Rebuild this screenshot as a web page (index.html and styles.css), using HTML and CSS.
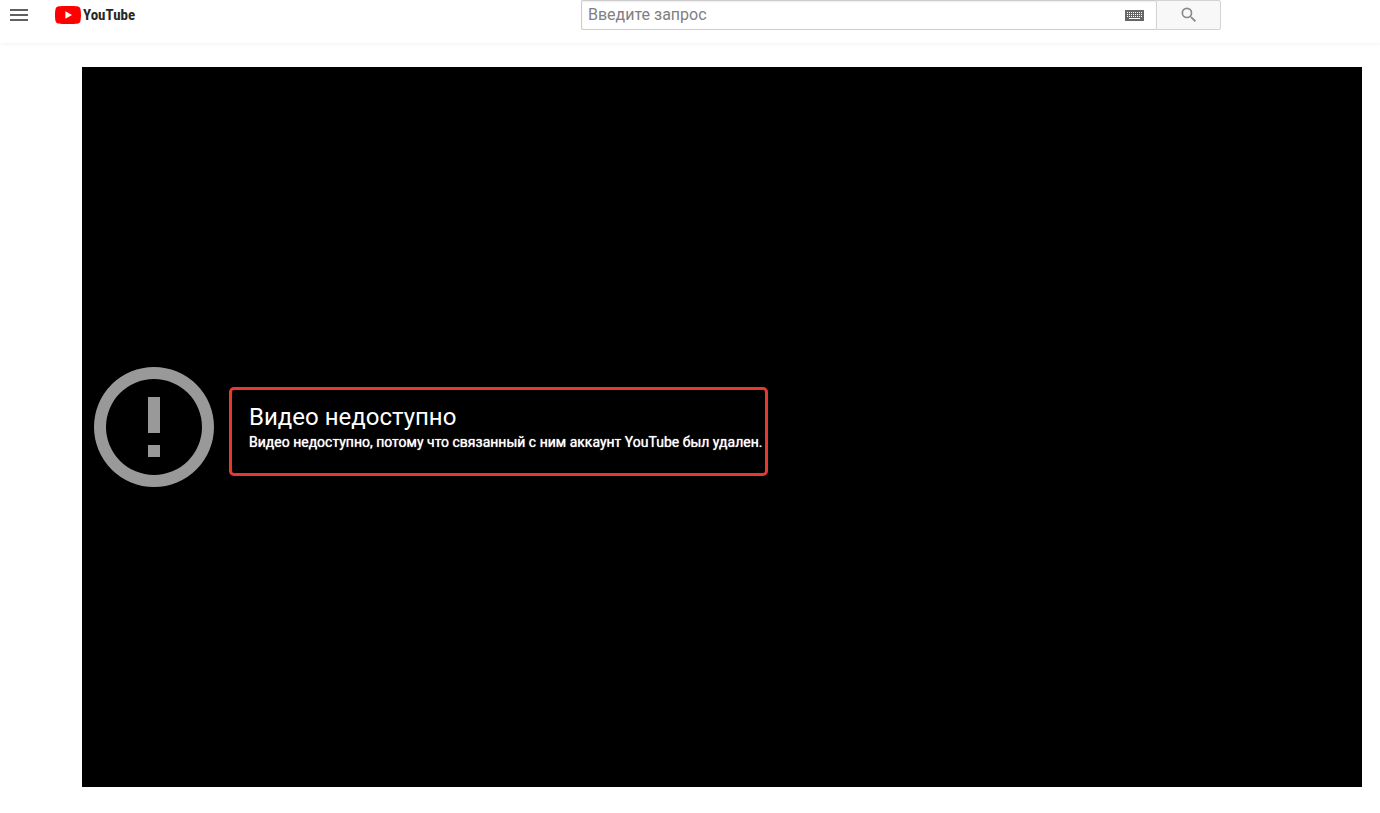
FILE: index.html
```html
<!DOCTYPE html>
<html lang="ru">
<head>
<meta charset="utf-8">
<title>YouTube</title>
<link rel="stylesheet" href="styles.css">
</head>
<body>
<header class="masthead">
  <div class="start">
    <button class="icon-button menu" type="button" aria-label="Меню">
      <svg width="24" height="24" viewBox="0 0 24 24"><path d="M3 18h18v-2H3v2zm0-5h18v-2H3v2zm0-7v2h18V6H3z"/></svg>
    </button>
    <a class="logo" href="#">
      <svg width="26" height="18" viewBox="0 0 26 18" aria-hidden="true"><path fill="#f00" d="M25.400 2.800A3.300 3.300 0 0 0 23.100.5C21 0 13 0 13 0S5 0 2.900.5A3.300 3.300 0 0 0 .600 2.800C0 5 0 9 0 9s0 4 .600 6.200a3.300 3.300 0 0 0 2.300 2.300C5 18 13 18 13 18s8 0 10.100-.5a3.300 3.300 0 0 0 2.300-2.300C26 13 26 9 26 9s0-4-.600-6.200z"/><path fill="#fff" d="M10.400 5.200v7.600L17 9z"/></svg>
      <span class="wordmark">YouTube</span>
    </a>
  </div>
  <form class="search">
    <div class="field">
      <input class="query" type="text" placeholder="Введите запрос" aria-label="Введите запрос">
      <button class="icon-button keyboard" type="button" aria-label="Экранная клавиатура">
        <svg width="19" height="11" viewBox="0 0 19 11" shape-rendering="crispEdges"><path fill="#666" d="M0 0h19v11H0z"/><path stroke="#fff" stroke-dasharray="1 1" d="M2 2.500h15M2 4.500h15M2 6.500h15"/><path stroke="#fff" d="M4 8.500h11"/></svg>
      </button>
    </div>
    <button class="submit" type="button" aria-label="Поиск">
      <svg width="20" height="20" viewBox="0 0 24 24"><path d="M15.500 14h-.790l-.280-.270A6.470 6.470 0 0 0 16 9.500 6.500 6.500 0 1 0 9.500 16c1.610 0 3.090-.590 4.230-1.570l.270.280v.790l5 4.990L20.490 19l-4.990-5zm-6 0a4.500 4.500 0 1 1 0-9 4.500 4.500 0 0 1 0 9z"/></svg>
    </button>
  </form>
  <div class="end"></div>
</header>
<main class="page">
  <section class="player">
    <svg class="alert" width="144" height="144" viewBox="0 0 24 24" aria-hidden="true"><path d="M11 15h2v2h-2zm0-8h2v6h-2zm1-5a10 10 0 1 0 0 20 10 10 0 0 0 0-20zm0 18a8 8 0 1 1 0-16 8 8 0 0 1 0 16z"/></svg>
    <div class="message">
      <h1 class="title">Видео недоступно</h1>
      <p class="reason">Видео недоступно, потому что связанный с ним аккаунт YouTube был удален.</p>
    </div>
  </section>
</main>
</body>
</html>
```
FILE: styles.css
```css
* {
  box-sizing: border-box;
}

body {
  margin: 0;
  background: #fff;
  font-family: Roboto, "Liberation Sans", sans-serif;
}

svg {
  display: block;
}

.masthead {
  display: flex;
  align-items: flex-start;
  padding-bottom: 13px;
  box-shadow: 0 1px 4px rgba(0, 0, 0, 0.06);
}

.start {
  display: flex;
  flex: 1;
  align-items: center;
  height: 30px;
  padding-left: 7px;
}

.end {
  flex: 0 1 159px;
}

.icon-button {
  padding: 0;
  border: 0;
  background: none;
}

.menu {
  fill: #606060;
}

.logo {
  display: flex;
  align-items: center;
  gap: 2px;
  margin-left: 24px;
  color: #282828;
  text-decoration: none;
}

.wordmark {
  font: bold 15px/18px "Roboto Condensed", "Liberation Sans Narrow", Roboto, sans-serif;
}

.search {
  display: flex;
  flex: 0 1 640px;
  height: 30px;
}

.field {
  display: flex;
  flex: 1;
  align-items: center;
  min-width: 0;
  padding: 0 12px 0 6px;
  border: 1px solid #ccc;
  border-right: 0;
  border-radius: 2px 0 0 2px;
  box-shadow: inset 0 1px 2px #eee;
}

.query {
  flex: 1;
  min-width: 0;
  padding: 0;
  border: 0;
  outline: 0;
  background: none;
  font: 16px/24px Roboto, "Liberation Sans", sans-serif;
}

.query::placeholder {
  color: #808080;
}

.submit {
  display: flex;
  align-items: center;
  justify-content: center;
  width: 65px;
  padding: 0;
  border: 1px solid #d3d3d3;
  border-radius: 0 2px 2px 0;
  background: #f8f8f8;
  fill: #888;
}

.page {
  padding: 24px 18px 26px 82px;
}

.player {
  display: flex;
  align-items: center;
  aspect-ratio: 16 / 9;
  background: #000;
  color: #fff;
}

.alert {
  flex: none;
  fill: #999;
}

.message {
  margin: 9px 0 0 3px;
  padding: 12px 3px 21px 17px;
  border: 3px solid #e53a30;
  border-radius: 5px;
}

.title {
  margin: 0;
  font-size: 24px;
  font-weight: 400;
  line-height: 30px;
}

.reason {
  margin: 0;
  font-size: 14px;
  font-weight: 400;
  line-height: 20px;
  text-shadow: 0 0 1px #fff;
}
```
